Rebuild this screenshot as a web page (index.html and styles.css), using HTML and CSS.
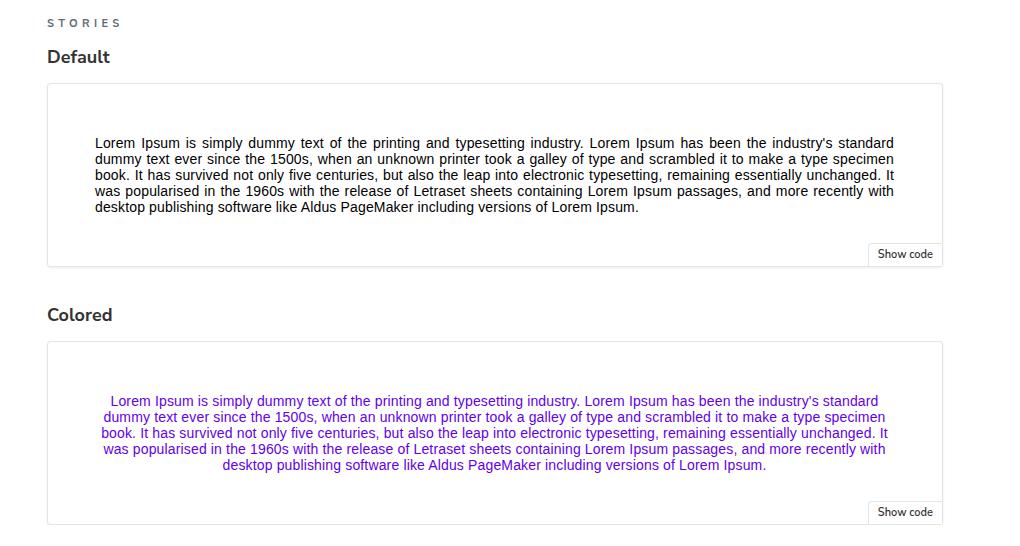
FILE: index.html
```html
<!DOCTYPE html>
<html>
<head>
<meta charset="utf-8">
<link rel="stylesheet" href="styles.css">
</head>
<body>
<main class="docs">
  <h2 class="section-label">Stories</h2>
  <section class="story">
    <h3 class="story-title">Default</h3>
    <div class="preview">
      <div class="preview-body">
        <p class="lorem lorem-default">Lorem Ipsum is simply dummy text of the printing and typesetting industry. Lorem Ipsum has been the industry's standard dummy text ever since the 1500s, when an unknown printer took a galley of type and scrambled it to make a type specimen book. It has survived not only five centuries, but also the leap into electronic typesetting, remaining essentially unchanged. It was popularised in the 1960s with the release of Letraset sheets containing Lorem Ipsum passages, and more recently with desktop publishing software like Aldus PageMaker including versions of Lorem Ipsum.</p>
      </div>
      <button class="show-code">Show code</button>
    </div>
  </section>
  <section class="story">
    <h3 class="story-title">Colored</h3>
    <div class="preview">
      <div class="preview-body">
        <p class="lorem lorem-colored">Lorem Ipsum is simply dummy text of the printing and typesetting industry. Lorem Ipsum has been the industry's standard dummy text ever since the 1500s, when an unknown printer took a galley of type and scrambled it to make a type specimen book. It has survived not only five centuries, but also the leap into electronic typesetting, remaining essentially unchanged. It was popularised in the 1960s with the release of Letraset sheets containing Lorem Ipsum passages, and more recently with desktop publishing software like Aldus PageMaker including versions of Lorem Ipsum.</p>
      </div>
      <button class="show-code">Show code</button>
    </div>
  </section>
</main>
</body>
</html>
```
FILE: styles.css
```css
* { box-sizing: border-box; }
html, body { margin: 0; padding: 0; background: #fff; }
body {
  font-family: "Nunito Sans", Lato, "Open Sans", sans-serif;
  color: #333;
}
.docs {
  width: 896px;
  margin-left: 47px;
  padding-top: 17px;
}
.section-label {
  margin: 0;
  font-size: 11px;
  font-weight: 700;
  letter-spacing: 0.4em;
  text-transform: uppercase;
  color: #5f6b75;
  line-height: 14px;
}
.story-title {
  margin: 14px 0 0;
  font-size: 18px;
  font-weight: 700;
  line-height: 24px;
  color: #333;
}
.story + .story .story-title { margin-top: 36px; }
.preview {
  position: relative;
  margin-top: 14px;
  border: 1px solid rgba(0,0,0,0.1);
  border-radius: 4px;
  box-shadow: rgba(0,0,0,0.08) 0 1px 3px 0;
  background: #fff;
}
.preview-body {
  padding: 51px 48px 51px 47px;
}
.lorem {
  margin: 0;
  font-family: "Liberation Sans", Arial, sans-serif;
  font-size: 14px;
  line-height: 16px;
  letter-spacing: 0.15px;
}
.lorem-default { text-align: justify; color: #000; }
.lorem-colored { text-align: center; color: #6200ea; }
.show-code {
  position: absolute;
  right: 0;
  bottom: 0;
  height: 23px;
  padding: 0 9px;
  border: 0;
  border-top: 1px solid rgba(0,0,0,0.1);
  border-left: 1px solid rgba(0,0,0,0.1);
  border-radius: 4px 0 0 0;
  background: #fff;
  font-family: "Nunito Sans", Lato, "Open Sans", sans-serif;
  font-size: 11px;
  font-weight: 600;
  color: #333;
  line-height: 22px;
}
```
